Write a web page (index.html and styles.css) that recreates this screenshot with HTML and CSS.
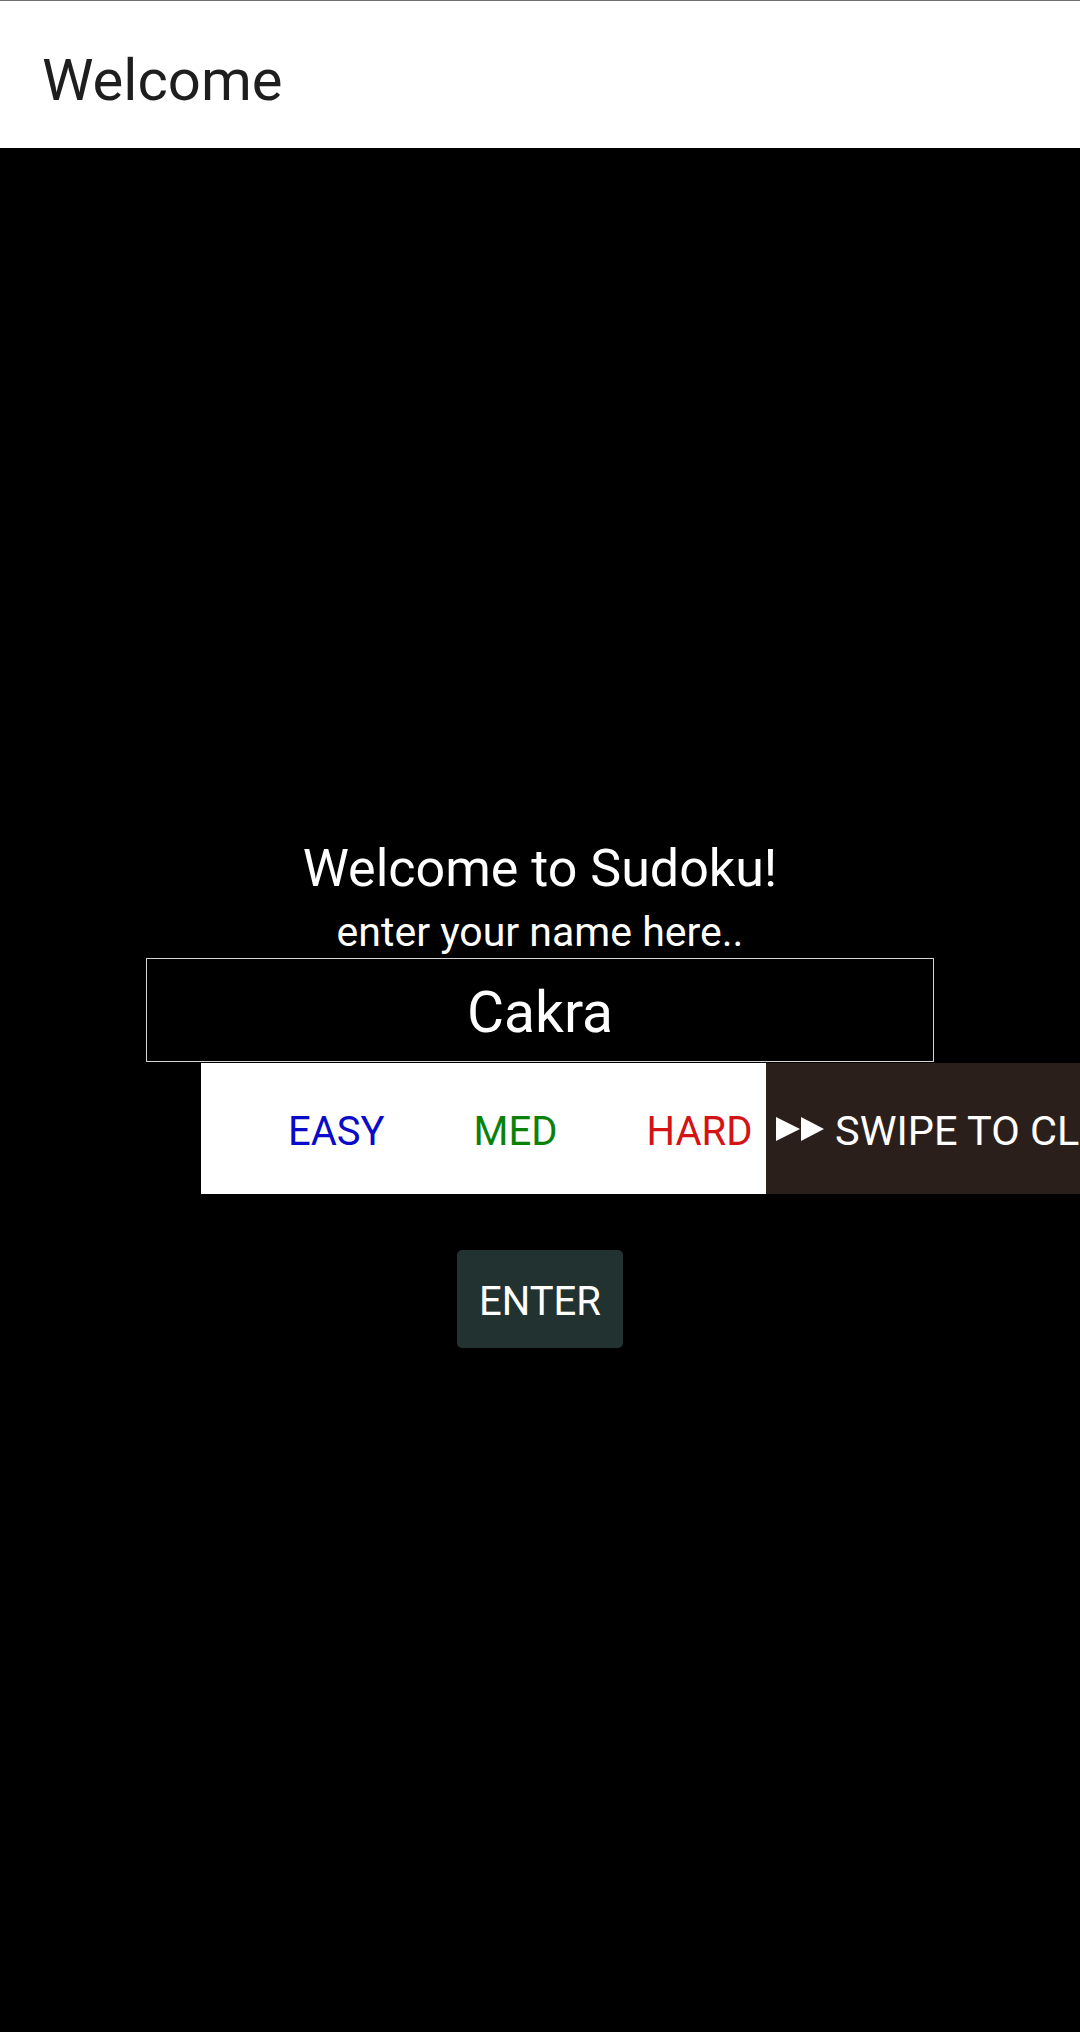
FILE: index.html
```html
<!DOCTYPE html>
<html lang="en">
<head>
<meta charset="utf-8">
<title>Welcome</title>
<link rel="stylesheet" href="styles.css">
</head>
<body>
<header class="appbar">Welcome</header>
<main class="content">
  <h1 class="title">Welcome to Sudoku!</h1>
  <p class="subtitle">enter your name here..</p>
  <div class="name-input">Cakra</div>
  <div class="level-row">
    <div class="levels">
      <span class="level easy">EASY</span>
      <span class="level med">MED</span>
      <span class="level hard">HARD</span>
    </div>
    <div class="swipe">
      <svg class="swipe-icon" width="48" height="24" viewBox="0 0 48 24" aria-hidden="true">
        <polygon points="0,0 24,12 0,24" fill="#ffffff"/>
        <polygon points="25,0 48,12 25,24" fill="#ffffff"/>
      </svg>
      <span class="swipe-text">SWIPE TO CLEAR</span>
    </div>
  </div>
  <button class="enter-btn">ENTER</button>
</main>
</body>
</html>
```

FILE: styles.css
```css
html, body {
  margin: 0;
  padding: 0;
}

body {
  background: #000000;
  font-family: Roboto, "Liberation Sans", sans-serif;
  width: 1080px;
  height: 2032px;
  overflow: hidden;
}

.appbar {
  border-top: 1px solid #6f6f6f;
  background: #ffffff;
  color: #1e1e1e;
  height: 136px;
  padding: 11px 0 0 42px;
  font-size: 58px;
  line-height: 136px;
}

.content {
  padding-top: 691px;
  display: flex;
  flex-direction: column;
  align-items: center;
}

.title {
  margin: 0;
  font-size: 52px;
  font-weight: 400;
  line-height: 60px;
  color: #ffffff;
}

.subtitle {
  margin: 8px 0 0;
  font-size: 41px;
  line-height: 50px;
  color: #ffffff;
}

.name-input {
  box-sizing: border-box;
  margin-top: 1px;
  width: 788px;
  height: 104px;
  border: 1px solid #d4d4d4;
  padding-top: 6px;
  font-size: 57px;
  line-height: 96px;
  text-align: center;
  color: #ffffff;
}

.level-row {
  align-self: flex-start;
  margin: 1px 0 0 201px;
  display: flex;
  height: 131px;
  white-space: nowrap;
  font-size: 40px;
}

.levels {
  flex: none;
  box-sizing: border-box;
  width: 565px;
  background: #ffffff;
  display: flex;
  gap: 89px;
  padding: 6px 0 0 87px;
  line-height: 125px;
}

.easy { color: #0a0ac8; }
.med { color: #0a820a; }
.hard { color: #d41414; }

.swipe {
  flex: none;
  background: #2b1f1b;
  display: flex;
  align-items: center;
  gap: 11px;
  padding: 4px 60px 0 10px;
  color: #ffffff;
  font-size: 41.5px;
}

.swipe-icon {
  display: block;
  margin-top: -4px;
}

.enter-btn {
  margin-top: 56px;
  box-sizing: border-box;
  width: 166px;
  height: 98px;
  border: none;
  border-radius: 5px;
  background: #213230;
  color: #ffffff;
  font-family: Roboto, "Liberation Sans", sans-serif;
  font-size: 40px;
  line-height: 92px;
  padding: 6px 0 0;
  text-align: center;
}
```
